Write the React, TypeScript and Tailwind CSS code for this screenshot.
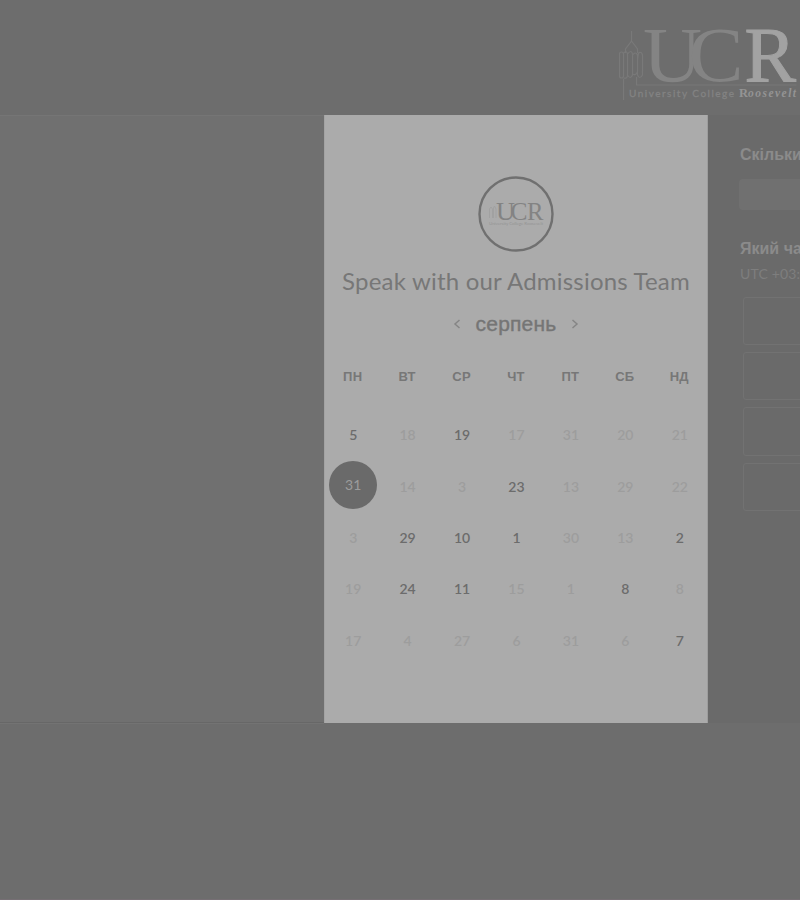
import React from "react";

const weekdays = ["ПН", "ВТ", "СР", "ЧТ", "ПТ", "СБ", "НД"];

type Day = { n: number; on?: boolean; selected?: boolean };

const days: Day[] = [
  { n: 5, on: true }, { n: 18 }, { n: 19, on: true }, { n: 17 }, { n: 31 }, { n: 20 }, { n: 21 },
  { n: 31, selected: true }, { n: 14 }, { n: 3 }, { n: 23, on: true }, { n: 13 }, { n: 29 }, { n: 22 },
  { n: 3 }, { n: 29, on: true }, { n: 10, on: true }, { n: 1, on: true }, { n: 30 }, { n: 13 }, { n: 2, on: true },
  { n: 19 }, { n: 24, on: true }, { n: 11, on: true }, { n: 15 }, { n: 1 }, { n: 8, on: true }, { n: 8 },
  { n: 17 }, { n: 4 }, { n: 27 }, { n: 6 }, { n: 31 }, { n: 6 }, { n: 7, on: true },
];

function HeaderLogo() {
  return (
    <svg width="184" height="90" viewBox="616 14 184 90" className="shrink-0">
      <g fill="none" stroke="#797979" strokeWidth="1.200">
        <path d="M631.500 31v10l-6 8v4M631.500 41l6 8v4M623.500 79v21M636.500 77v8h160" />
        <rect x="619.500" y="52" width="4" height="26" rx="2" />
        <path d="M623.500 53q4-3 4 2v20q0 4-4 3M627.500 54q4-5 5 0v21q-2 5-5 0" />
        <path d="M632.500 55q3-4 5 0v17q-2 4-5 2M637.500 60v15q2 5 5 0v-20q-1-4-4-2z" />
      </g>
      <g fontFamily="'Liberation Serif', serif" fontSize="79">
        <text x="643" y="80.500" fill="#848484" textLength="59" lengthAdjust="spacingAndGlyphs">U</text>
        <text x="688.500" y="80.500" fill="#848484" textLength="55" lengthAdjust="spacingAndGlyphs">C</text>
        <text x="744.500" y="80.500" fill="#a2a2a2" stroke="#a2a2a2" strokeWidth="1" textLength="51.500" lengthAdjust="spacingAndGlyphs">R</text>
      </g>
      <text x="629" y="97" fontFamily="Lato, sans-serif" fontSize="10" fill="#838383" stroke="#838383" strokeWidth="0.300" textLength="105">University College</text>
      <text x="739" y="97" fontFamily="'Liberation Serif', serif" fontSize="12.500" fontWeight="bold" fill="#949494">
        R<tspan fontStyle="italic" fontSize="11.500" textLength="48">oosevelt</tspan>
      </text>
    </svg>
  );
}

function RoundLogo() {
  return (
    <svg width="76" height="76" viewBox="0 0 76 76">
      <circle cx="38" cy="38" r="36.500" fill="none" stroke="#707070" strokeWidth="2.400" />
      <g fontFamily="'Liberation Serif', serif" fontSize="25" fill="#838383">
        <text x="18" y="43.500" textLength="19" lengthAdjust="spacingAndGlyphs">U</text>
        <text x="32.500" y="43.500" textLength="17" lengthAdjust="spacingAndGlyphs">C</text>
        <text x="49" y="43.500" textLength="16.500" lengthAdjust="spacingAndGlyphs">R</text>
      </g>
      <path d="M11.500 42V33l1.500-2 1.500 2v9M15.500 42V32l1-2 1.500 3v9" fill="none" stroke="#a1a1a1" />
      <text x="11" y="48.500" fontFamily="Lato, sans-serif" fontSize="4.500" fill="#959595" textLength="54">University College Roosevelt</text>
    </svg>
  );
}

function DayCell({ day }: { day: Day }) {
  if (day.selected) {
    return (
      <div className="flex items-center justify-center">
        <span className="mt-[-2px] flex size-12 shrink-0 items-center justify-center rounded-full bg-[#6a6a6a] pb-[2px] text-[14px] text-[#9c9c9c]">
          {day.n}
        </span>
      </div>
    );
  }
  return (
    <div className={"flex items-center justify-center text-[14px] " + (day.on ? "font-semibold text-[#6c6c6c]" : "font-semibold text-[#9d9d9d]")}>
      {day.n}
    </div>
  );
}

export default function App() {
  return (
    <div className="flex h-[900px] w-[800px] flex-col overflow-hidden border-b border-[#766f74] bg-[#6d6d6d] font-['Liberation_Sans',sans-serif]">
      <header className="flex h-[115px] shrink-0 justify-end pt-[14px]">
        <HeaderLogo />
      </header>
      <main className="flex h-[608px] shrink-0">
        <aside className="w-[324px] shrink-0 border-y border-t-[#757575] border-b-[#676767] bg-[#707070]" />
        <section className="flex w-[384px] shrink-0 flex-col items-center border-x border-l-[#a3a3a3] border-r-[#9d9d9d] bg-[#ababab]">
          <div className="mt-[61px] h-[76px]">
            <RoundLogo />
          </div>
          <h1 className="mt-[13px] h-8 whitespace-nowrap font-[Lato,sans-serif] text-[24px] leading-8 tracking-[0.2px] text-[#777777]">
            Speak with our Admissions Team
          </h1>
          <div className="mt-[13px] flex h-7 items-center gap-[15px] text-[#757575]">
            <svg width="8" height="12" viewBox="0 0 8 12" fill="none" stroke="#858585" strokeWidth="1.500"><path d="M6.500 2 2 6l4.500 4" /></svg>
            <h2 className="text-[21px] leading-7 tracking-[0.2px] [-webkit-text-stroke:0.4px_#757575]">серпень</h2>
            <svg width="8" height="12" viewBox="0 0 8 12" fill="none" stroke="#858585" strokeWidth="1.500"><path d="m1.500 2 4.500 4-4.500 4" /></svg>
          </div>
          <div className="mt-[29px] grid w-[381px] grid-cols-7 text-center text-[13px] leading-5 font-bold tracking-[0.3px] text-[#777777]">
            {weekdays.map((d) => <div key={d}>{d}</div>)}
          </div>
          <div className="mt-[22px] ml-px grid h-[257px] w-[381px] grid-cols-7 grid-rows-5 font-[Lato,sans-serif]">
            {days.map((d, i) => <DayCell key={i} day={d} />)}
          </div>
        </section>
        <section className="min-w-0 flex-1 overflow-hidden bg-[#6a6a6a] pt-[30px] pl-[31px] whitespace-nowrap">
          <h3 className="h-5 pl-px text-[16px] leading-5 font-bold text-[#8b8b8b]">Скільки часу вам потрібно?</h3>
          <div className="mt-[14px] h-[31px] w-[300px] rounded-sm bg-[#707070]" />
          <h3 className="mt-[29px] h-5 pl-px text-[16px] leading-5 font-bold text-[#8b8b8b]">Який час підходить?</h3>
          <p className="mt-[5px] h-5 pl-px font-[Lato,sans-serif] text-[14px] leading-5 tracking-[0.15px] text-[#7e7e7e]">UTC +03:00</p>
          <div className="mt-[13px] ml-1 flex w-[300px] flex-col gap-[7px]">
            {[0, 1, 2, 3].map((i) => <div key={i} className="h-[48.200px] rounded-[3px] border border-[#727272]" />)}
          </div>
        </section>
      </main>
      <footer className="flex-1">
        <div className="h-px w-[324px] bg-[#737373]" />
      </footer>
    </div>
  );
}
